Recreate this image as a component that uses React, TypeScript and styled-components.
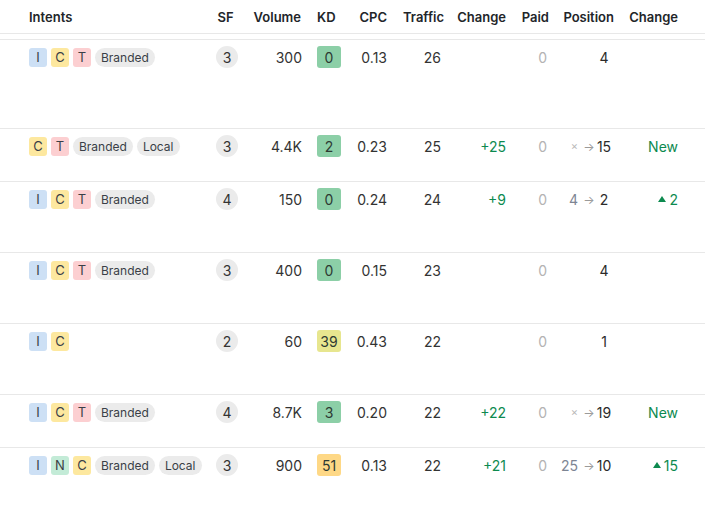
import React from "react";
import styled, { createGlobalStyle, css } from "styled-components";

const GlobalStyle = createGlobalStyle`
  html, body { margin: 0; padding: 0; background: #ffffff; }
  body { font-family: Inter, "Noto Sans", "Liberation Sans", sans-serif; color: #333333; }
`;

const COLS = "205px 44px 56px 45px 40px 57px 62px 41px 66px 1fr";

const Table = styled.div`
  width: 705px;
`;

const HeaderRow = styled.div`
  display: grid;
  grid-template-columns: ${COLS};
  height: 33px;
  align-items: center;
  border-bottom: 1px solid #e8e8e8;
  margin-bottom: 5px;
`;

type Align = "left" | "right" | "center";

const HeadCell = styled.div<{ $align: Align; $pl?: number; $pr?: number }>`
  font-size: 13px;
  font-weight: 600;
  color: #222529;
  white-space: nowrap;
  text-align: ${(p) => p.$align};
  padding-left: ${(p) => p.$pl ?? 0}px;
  padding-right: ${(p) => p.$pr ?? 0}px;
`;

const Row = styled.div<{ $h: number }>`
  display: grid;
  grid-template-columns: ${COLS};
  align-items: start;
  height: ${(p) => p.$h}px;
  box-sizing: border-box;
  border-top: 1px solid #e8e8e8;
  padding-top: 6px;
`;

const Cell = styled.div<{ $align: Align; $pl?: number; $pr?: number }>`
  height: 22px;
  display: flex;
  align-items: center;
  justify-content: ${(p) =>
    p.$align === "left" ? "flex-start" : p.$align === "right" ? "flex-end" : "center"};
  padding-left: ${(p) => p.$pl ?? 0}px;
  padding-right: ${(p) => p.$pr ?? 0}px;
  font-size: 14px;
  color: #333333;
  white-space: nowrap;
`;

const Intents = styled.div`
  display: flex;
  align-items: center;
  gap: 4px;
  padding-left: 29px;
  height: 22px;
`;

const INTENT_BG: Record<string, string> = {
  I: "#cde0f5",
  C: "#fde89f",
  T: "#fccfd1",
  N: "#c3ebd7",
};

const IntentBox = styled.span<{ $k: string }>`
  display: inline-flex;
  align-items: center;
  justify-content: center;
  width: 18px;
  height: 19px;
  border-radius: 3px;
  background: ${(p) => INTENT_BG[p.$k]};
  font-size: 13px;
  color: #3a3f47;
`;

const Tag = styled.span`
  display: inline-flex;
  align-items: center;
  height: 19px;
  padding: 0 6px;
  border-radius: 10px;
  background: #ebebeb;
  font-size: 12px;
  color: #3a3f47;
`;

const SfCircle = styled.span`
  display: inline-flex;
  align-items: center;
  justify-content: center;
  width: 22px;
  height: 22px;
  border-radius: 50%;
  background: #ebebeb;
  font-size: 14px;
  color: #333;
`;

const kdColor = (v: number) => (v < 15 ? "#8ccfa7" : v < 50 ? "#e7e68f" : "#fed886");

const KdBox = styled.span<{ $v: number }>`
  display: inline-flex;
  align-items: center;
  justify-content: center;
  width: 24px;
  height: 22px;
  border-radius: 3px;
  background: ${(p) => kdColor(p.$v)};
  font-size: 14px;
  color: #2d3a33;
`;

const Green = styled.span`
  color: #0d8a4f;
`;

const Muted = styled.span`
  color: #b3b3b3;
`;

const PosWrap = styled.div`
  display: flex;
  align-items: center;
`;

const From = styled.span<{ $x?: boolean }>`
  color: #7d8593;
  ${(p) =>
    p.$x &&
    css`
      color: #b9b9b9;
      font-size: 11px;
    `}
`;

const Arrow = styled.span`
  display: inline-flex;
  width: 10px;
  margin-left: 6px;
  justify-content: center;
  color: #9a9a9a;
  font-size: 12px;
`;

const To = styled.span`
  display: inline-block;
  width: 20px;
  text-align: center;
  color: #2b2b2b;
`;

const Up = styled.span`
  display: inline-flex;
  align-items: center;
  gap: 3px;
  color: #0d8a4f;
`;

const Triangle = () => (
  <svg width="8" height="6" viewBox="0 0 8 6">
    <polygon points="4,0 8,6 0,6" fill="#0d8a4f" />
  </svg>
);

type RowData = {
  intents: string[];
  tags: string[];
  sf: number;
  volume: string;
  kd: number;
  cpc: string;
  traffic: number;
  change?: string;
  pos: { from?: string; to: number };
  posChange?: { kind: "new" } | { kind: "up"; v: number };
  h: number;
};

const rows: RowData[] = [
  { intents: ["I", "C", "T"], tags: ["Branded"], sf: 3, volume: "300", kd: 0, cpc: "0.13", traffic: 26, pos: { to: 4 }, h: 89 },
  { intents: ["C", "T"], tags: ["Branded", "Local"], sf: 3, volume: "4.4K", kd: 2, cpc: "0.23", traffic: 25, change: "+25", pos: { from: "×", to: 15 }, posChange: { kind: "new" }, h: 53 },
  { intents: ["I", "C", "T"], tags: ["Branded"], sf: 4, volume: "150", kd: 0, cpc: "0.24", traffic: 24, change: "+9", pos: { from: "4", to: 2 }, posChange: { kind: "up", v: 2 }, h: 71 },
  { intents: ["I", "C", "T"], tags: ["Branded"], sf: 3, volume: "400", kd: 0, cpc: "0.15", traffic: 23, pos: { to: 4 }, h: 71 },
  { intents: ["I", "C"], tags: [], sf: 2, volume: "60", kd: 39, cpc: "0.43", traffic: 22, pos: { to: 1 }, h: 71 },
  { intents: ["I", "C", "T"], tags: ["Branded"], sf: 4, volume: "8.7K", kd: 3, cpc: "0.20", traffic: 22, change: "+22", pos: { from: "×", to: 19 }, posChange: { kind: "new" }, h: 53 },
  { intents: ["I", "N", "C"], tags: ["Branded", "Local"], sf: 3, volume: "900", kd: 51, cpc: "0.13", traffic: 22, change: "+21", pos: { from: "25", to: 10 }, posChange: { kind: "up", v: 15 }, h: 64 },
];

export default function App() {
  return (
    <>
      <GlobalStyle />
      <Table>
        <HeaderRow>
          <HeadCell $align="left" $pl={29}>Intents</HeadCell>
          <HeadCell $align="center" $pr={3}>SF</HeadCell>
          <HeadCell $align="right" $pr={4}>Volume</HeadCell>
          <HeadCell $align="left" $pl={12}>KD</HeadCell>
          <HeadCell $align="right" $pr={3}>CPC</HeadCell>
          <HeadCell $align="right" $pr={3}>Traffic</HeadCell>
          <HeadCell $align="right" $pr={3}>Change</HeadCell>
          <HeadCell $align="right" $pr={1}>Paid</HeadCell>
          <HeadCell $align="right" $pr={2}>Position</HeadCell>
          <HeadCell $align="right" $pr={27}>Change</HeadCell>
        </HeaderRow>
        {rows.map((r, i) => (
          <Row key={i} $h={r.h}>
            <Intents>
              {r.intents.map((k) => (
                <IntentBox key={k} $k={k}>{k}</IntentBox>
              ))}
              {r.tags.map((t) => (
                <Tag key={t}>{t}</Tag>
              ))}
            </Intents>
            <Cell $align="center">
              <SfCircle>{r.sf}</SfCircle>
            </Cell>
            <Cell $align="right" $pr={3}>{r.volume}</Cell>
            <Cell $align="left" $pl={12}>
              <KdBox $v={r.kd}>{r.kd}</KdBox>
            </Cell>
            <Cell $align="right" $pr={3}>{r.cpc}</Cell>
            <Cell $align="right" $pr={6}>{r.traffic}</Cell>
            <Cell $align="right" $pr={3}>{r.change && <Green>{r.change}</Green>}</Cell>
            <Cell $align="right" $pr={3}>
              <Muted>0</Muted>
            </Cell>
            <Cell $align="right" $pr={2}>
              <PosWrap>
                {r.pos.from && (
                  <>
                    <From $x={r.pos.from === "×"}>{r.pos.from}</From>
                    <Arrow>→</Arrow>
                  </>
                )}
                <To>{r.pos.to}</To>
              </PosWrap>
            </Cell>
            <Cell $align="right" $pr={27}>
              {r.posChange?.kind === "new" && <Green>New</Green>}
              {r.posChange?.kind === "up" && (
                <Up>
                  <Triangle />
                  {r.posChange.v}
                </Up>
              )}
            </Cell>
          </Row>
        ))}
      </Table>
    </>
  );
}
